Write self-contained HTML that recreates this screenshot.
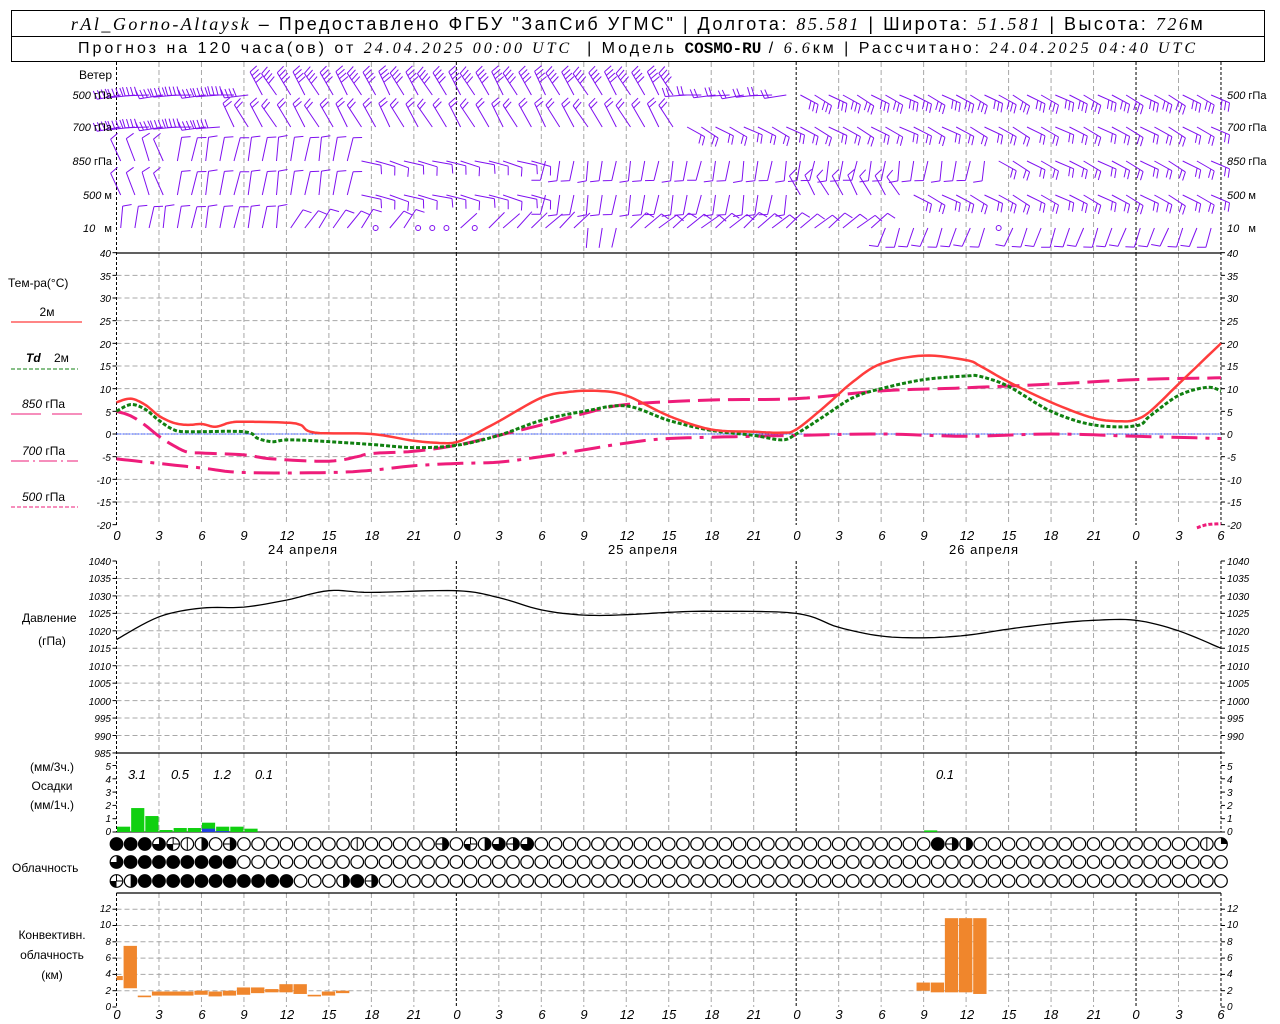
<!DOCTYPE html>
<html><head><meta charset="utf-8">
<style>
html,body{margin:0;padding:0;background:#fff;}
body{width:1280px;height:1024px;overflow:hidden;position:relative;font-family:"Liberation Sans","DejaVu Sans",sans-serif;}
#hdr{position:absolute;left:11px;top:10px;width:1252px;height:50px;border:1px solid #000;}
.row{position:absolute;left:0;width:100%;text-align:center;white-space:nowrap;color:#000;}
#r1{top:0;height:25px;line-height:26px;font-size:18px;border-bottom:1px solid #000;letter-spacing:2.5px}
#r2{top:26px;height:24px;line-height:24px;font-size:16px;letter-spacing:3px}
i{font-family:"Liberation Serif",serif;}
svg{position:absolute;left:0;top:0;}
svg text{font-family:"Liberation Sans","DejaVu Sans",sans-serif;fill:#000;}
.t{font-size:10px;font-style:italic;}
.hx{font-size:13px;font-style:italic;}
</style></head><body>
<div id="hdr">
<div class="row" id="r1"><i>rAl_Gorno-Altaysk</i> – Предоставлено ФГБУ "ЗапСиб УГМС" | Долгота: <i>85.581</i> | Широта: <i>51.581</i> | Высота: <i>726</i>м</div>
<div class="row" id="r2">Прогноз на 120 часа(ов) от <i>24.04.2025 00:00 UTC</i> &nbsp;| Модель <b style="font-family:'Liberation Mono',monospace;letter-spacing:0">COSMO-RU</b> / <i>6.6</i>км | Рассчитано: <i>24.04.2025 04:40 UTC</i></div>
</div>
<svg id="s" width="1280" height="1024" xmlns="http://www.w3.org/2000/svg">
<g id="g"></g>
<g font-size="11">
<text x="112" y="79" text-anchor="end" font-size="12">Ветер</text>
<text x="112" y="99" text-anchor="end"><tspan font-style="italic">500</tspan> гПа</text>
<text x="112" y="131" text-anchor="end"><tspan font-style="italic">700</tspan> гПа</text>
<text x="112" y="165" text-anchor="end"><tspan font-style="italic">850</tspan> гПа</text>
<text x="112" y="199" text-anchor="end"><tspan font-style="italic">500</tspan> м</text>
<text x="112" y="232" text-anchor="end"><tspan font-style="italic">10</tspan> &#160; м</text>
<text x="1227" y="99"><tspan font-style="italic">500</tspan> гПа</text>
<text x="1227" y="131"><tspan font-style="italic">700</tspan> гПа</text>
<text x="1227" y="165"><tspan font-style="italic">850</tspan> гПа</text>
<text x="1227" y="199"><tspan font-style="italic">500</tspan> м</text>
<text x="1227" y="232"><tspan font-style="italic">10</tspan> &#160; м</text>
</g>
<g font-size="12">
<text x="8" y="287">Тем-ра(°C)</text>
<text x="47" y="316" text-anchor="middle">2м</text>
<text x="26" y="362" font-style="italic" font-weight="bold" font-family="Liberation Serif">Td</text><text x="54" y="362">2м</text>
<text x="22" y="408"><tspan font-style="italic">850</tspan> гПа</text>
<text x="22" y="455"><tspan font-style="italic">700</tspan> гПа</text>
<text x="22" y="501"><tspan font-style="italic">500</tspan> гПа</text>
<text x="22" y="622">Давление</text>
<text x="52" y="645" text-anchor="middle">(гПа)</text>
<text x="52" y="771" text-anchor="middle">(мм/3ч.)</text>
<text x="52" y="790" text-anchor="middle">Осадки</text>
<text x="52" y="809" text-anchor="middle">(мм/1ч.)</text>
<text x="12" y="872">Облачность</text>
<text x="52" y="939" text-anchor="middle">Конвективн.</text>
<text x="52" y="959" text-anchor="middle">облачность</text>
<text x="52" y="979" text-anchor="middle">(км)</text>
<text x="303" y="554" text-anchor="middle" font-size="13" letter-spacing="1">24 апреля</text>
<text x="643" y="554" text-anchor="middle" font-size="13" letter-spacing="1">25 апреля</text>
<text x="984" y="554" text-anchor="middle" font-size="13" letter-spacing="1">26 апреля</text>
</g>
<g font-size="13" font-style="italic">
<text x="137" y="779" text-anchor="middle">3.1</text>
<text x="180" y="779" text-anchor="middle">0.5</text>
<text x="222" y="779" text-anchor="middle">1.2</text>
<text x="264" y="779" text-anchor="middle">0.1</text>
<text x="945" y="779" text-anchor="middle">0.1</text>
</g>
<g class="hx" text-anchor="middle">
<text x="117" y="540">0</text><text x="159" y="540">3</text><text x="202" y="540">6</text><text x="244" y="540">9</text><text x="287" y="540">12</text><text x="329" y="540">15</text><text x="372" y="540">18</text><text x="414" y="540">21</text><text x="457" y="540">0</text><text x="499" y="540">3</text><text x="542" y="540">6</text><text x="584" y="540">9</text><text x="627" y="540">12</text><text x="669" y="540">15</text><text x="712" y="540">18</text><text x="754" y="540">21</text><text x="797" y="540">0</text><text x="839" y="540">3</text><text x="882" y="540">6</text><text x="924" y="540">9</text><text x="967" y="540">12</text><text x="1009" y="540">15</text><text x="1051" y="540">18</text><text x="1094" y="540">21</text><text x="1136" y="540">0</text><text x="1179" y="540">3</text><text x="1221" y="540">6</text>
<text x="117" y="1019">0</text><text x="159" y="1019">3</text><text x="202" y="1019">6</text><text x="244" y="1019">9</text><text x="287" y="1019">12</text><text x="329" y="1019">15</text><text x="372" y="1019">18</text><text x="414" y="1019">21</text><text x="457" y="1019">0</text><text x="499" y="1019">3</text><text x="542" y="1019">6</text><text x="584" y="1019">9</text><text x="627" y="1019">12</text><text x="669" y="1019">15</text><text x="712" y="1019">18</text><text x="754" y="1019">21</text><text x="797" y="1019">0</text><text x="839" y="1019">3</text><text x="882" y="1019">6</text><text x="924" y="1019">9</text><text x="967" y="1019">12</text><text x="1009" y="1019">15</text><text x="1051" y="1019">18</text><text x="1094" y="1019">21</text><text x="1136" y="1019">0</text><text x="1179" y="1019">3</text><text x="1221" y="1019">6</text>
</g>
<g class="t">
<text x="111" y="257" text-anchor="end">40</text><text x="111" y="280" text-anchor="end">35</text><text x="111" y="302" text-anchor="end">30</text><text x="111" y="325" text-anchor="end">25</text><text x="111" y="348" text-anchor="end">20</text><text x="111" y="370" text-anchor="end">15</text><text x="111" y="393" text-anchor="end">10</text><text x="111" y="416" text-anchor="end">5</text><text x="111" y="438" text-anchor="end">0</text><text x="111" y="461" text-anchor="end">-5</text><text x="111" y="484" text-anchor="end">-10</text><text x="111" y="506" text-anchor="end">-15</text><text x="111" y="529" text-anchor="end">-20</text>
<text x="1227" y="257">40</text><text x="1227" y="280">35</text><text x="1227" y="302">30</text><text x="1227" y="325">25</text><text x="1227" y="348">20</text><text x="1227" y="370">15</text><text x="1227" y="393">10</text><text x="1227" y="416">5</text><text x="1227" y="438">0</text><text x="1227" y="461">-5</text><text x="1227" y="484">-10</text><text x="1227" y="506">-15</text><text x="1227" y="529">-20</text>
<text x="111" y="565" text-anchor="end">1040</text><text x="111" y="582" text-anchor="end">1035</text><text x="111" y="600" text-anchor="end">1030</text><text x="111" y="617" text-anchor="end">1025</text><text x="111" y="635" text-anchor="end">1020</text><text x="111" y="652" text-anchor="end">1015</text><text x="111" y="670" text-anchor="end">1010</text><text x="111" y="687" text-anchor="end">1005</text><text x="111" y="705" text-anchor="end">1000</text><text x="111" y="722" text-anchor="end">995</text><text x="111" y="740" text-anchor="end">990</text><text x="111" y="757" text-anchor="end">985</text>
<text x="1227" y="565">1040</text><text x="1227" y="582">1035</text><text x="1227" y="600">1030</text><text x="1227" y="617">1025</text><text x="1227" y="635">1020</text><text x="1227" y="652">1015</text><text x="1227" y="670">1010</text><text x="1227" y="687">1005</text><text x="1227" y="705">1000</text><text x="1227" y="722">995</text><text x="1227" y="740">990</text>
<text x="111" y="770" text-anchor="end">5</text><text x="111" y="783" text-anchor="end">4</text><text x="111" y="796" text-anchor="end">3</text><text x="111" y="809" text-anchor="end">2</text><text x="111" y="822" text-anchor="end">1</text><text x="111" y="835" text-anchor="end">0</text>
<text x="1227" y="770">5</text><text x="1227" y="783">4</text><text x="1227" y="796">3</text><text x="1227" y="809">2</text><text x="1227" y="822">1</text><text x="1227" y="835">0</text>
<text x="111" y="912" text-anchor="end">12</text><text x="111" y="928" text-anchor="end">10</text><text x="111" y="945" text-anchor="end">8</text><text x="111" y="961" text-anchor="end">6</text><text x="111" y="977" text-anchor="end">4</text><text x="111" y="994" text-anchor="end">2</text><text x="111" y="1010" text-anchor="end">0</text>
<text x="1227" y="912">12</text><text x="1227" y="928">10</text><text x="1227" y="945">8</text><text x="1227" y="961">6</text><text x="1227" y="977">4</text><text x="1227" y="994">2</text><text x="1227" y="1010">0</text>
</g>
</svg>
<script>
(function(){
var NS="http://www.w3.org/2000/svg",g=document.getElementById('g');
function el(n,a){var e=document.createElementNS(NS,n);for(var k in a)e.setAttribute(k,a[k]);g.appendChild(e);return e;}
var X0=116.5,PX=14.16,XR=X0+78*PX;
function X(h){return X0+h*PX;}
function TY(t){return 434-t*4.533;}
function PY(p){return 561+(1040-p)*3.49;}
function RY(v){return 832-v*13.3;}
function CY(v){return 1007-v*8.15;}
for(var t=-15;t<40;t+=5){el('line',{x1:X0,x2:XR,y1:TY(t),y2:TY(t),stroke:'#a8a8a8','stroke-dasharray':'5,3'});}
for(var p=990;p<1040;p+=5){el('line',{x1:X0,x2:XR,y1:PY(p),y2:PY(p),stroke:'#a8a8a8','stroke-dasharray':'5,3'});}
for(var c=2;c<=12;c+=2){el('line',{x1:X0,x2:XR,y1:CY(c),y2:CY(c),stroke:'#a8a8a8','stroke-dasharray':'5,3'});}
var segs=[[62,253],[253,525],[561,753],[753,832],[893,1007]];
for(var h=3;h<78;h+=3){var day=(h%24==0);
 segs.forEach(function(s){el('line',{x1:X(h),x2:X(h),y1:s[0],y2:s[1],stroke:day?'#000':'#a8a8a8','stroke-dasharray':day?'3,2':'5,3'});});}
[[62,525],[561,832],[893,1007]].forEach(function(s){
 el('line',{x1:X0,x2:X0,y1:s[0],y2:s[1],stroke:'#000','stroke-dasharray':'3,2'});
 el('line',{x1:XR,x2:XR,y1:s[0],y2:s[1],stroke:'#000','stroke-dasharray':'3,2'});});
[253,753,893].forEach(function(y){el('line',{x1:X0,x2:XR,y1:y,y2:y,stroke:'#000','stroke-width':1.2});});
el('line',{x1:X0,x2:XR,y1:832,y2:832,stroke:'#000'});
function ticks(vals,f){vals.forEach(function(v){var y=f(v);el('line',{x1:X0-4,x2:X0,y1:y,y2:y,stroke:'#000'});el('line',{x1:XR,x2:XR+4,y1:y,y2:y,stroke:'#000'});});}
var a=[];for(t=-20;t<=40;t+=5)a.push(t);ticks(a,TY);
a=[];for(p=985;p<=1040;p+=5)a.push(p);ticks(a,PY);
ticks([0,1,2,3,4,5],RY);ticks([0,2,4,6,8,10,12],CY);
el('line',{x1:X0,x2:XR,y1:TY(0),y2:TY(0),stroke:'#3050ff','stroke-dasharray':'2,1'});
function spline(pts,fy){var out=[];for(var i=0;i<pts.length-1;i++){var p0=pts[Math.max(0,i-1)],p1=pts[i],p2=pts[i+1],p3=pts[Math.min(pts.length-1,i+2)];
 for(var s=0;s<8;s++){var u=s/8,u2=u*u,u3=u2*u;
  var x=0.5*((2*p1[0])+(-p0[0]+p2[0])*u+(2*p0[0]-5*p1[0]+4*p2[0]-p3[0])*u2+(-p0[0]+3*p1[0]-3*p2[0]+p3[0])*u3);
  var y=0.5*((2*p1[1])+(-p0[1]+p2[1])*u+(2*p0[1]-5*p1[1]+4*p2[1]-p3[1])*u2+(-p0[1]+3*p1[1]-3*p2[1]+p3[1])*u3);
  out.push(X(x).toFixed(1)+','+fy(y).toFixed(1));}}
 var l=pts[pts.length-1];out.push(X(l[0]).toFixed(1)+','+fy(l[1]).toFixed(1));return out.join(' ');}
var T2=[[0,7],[1,7.8],[2,6.5],[3,4],[4,2.5],[5,2],[6,2.2],[7,1.6],[8,2.5],[9,2.7],[12,2.5],[13,2],[14,0.3],[18,0],[21,-1.5],[23,-2],[24,-1.8],[25,-0.5],[27,2.8],[30,8],[32,9.3],[34,9.5],[36,8.5],[39,4],[42,1],[45,0.5],[47,0.3],[48,1],[50,6],[52,11.5],[54,15.5],[57,17.3],[60,16.3],[61,15],[63,11.5],[66,7],[69,3.5],[71,2.8],[72,3.2],[73,5],[75,11],[78,20]];
var TD=[[0,5],[1,6.5],[2,5.5],[3,3],[4,1],[5,0.5],[9,0.5],[10,-1],[11,-1.7],[12,-1.3],[14,-1.5],[18,-2.3],[21,-3],[24,-2.5],[27,-0.3],[30,3],[33,5],[36,6.2],[39,3],[42,0.8],[45,-0.3],[47,-1.3],[48,0],[50,4],[52,8],[54,10],[57,12],[60,12.8],[61,12.7],[63,10.5],[66,5],[69,2],[72,1.8],[73,4],[75,8.5],[77,10.3],[78,9.5]];
var P85=[[0,5],[1,4],[2,2],[3,-0.5],[4,-2.5],[5,-4],[6,-4.2],[9,-4.6],[11,-5.5],[15,-6],[17,-5],[18,-4.3],[21,-3.8],[24,-2.5],[27,-0.3],[30,2],[33,4.5],[36,6.5],[42,7.5],[48,7.8],[54,9.5],[60,10.2],[66,11],[72,12],[78,12.4]];
var P70=[[0,-5.5],[3,-6.5],[6,-7.5],[9,-8.5],[15,-8.5],[18,-8],[21,-7],[24,-6.5],[27,-6.2],[30,-5],[33,-3.5],[36,-2],[39,-1],[45,-0.5],[48,-0.3],[54,0],[60,-0.5],[66,0],[72,-0.5],[78,-1]];
var P50=[[76.3,-20.7],[77,-20],[78,-19.8]];
var PR=[[0,1017.5],[3,1024],[6,1026.5],[9,1026.8],[12,1028.8],[15,1031.5],[18,1031],[24,1031.5],[27,1029.5],[30,1026],[33,1024.5],[36,1024.6],[39,1025.3],[42,1025.6],[48,1025],[51,1021],[54,1018.5],[57,1018],[60,1018.7],[63,1020.5],[66,1022],[69,1023],[72,1023],[75,1020],[78,1015]];
el('polyline',{points:spline(P70,TY),fill:'none',stroke:'#ee1c7a','stroke-width':3,'stroke-dasharray':'26,8,4,8'});
el('polyline',{points:spline(P85,TY),fill:'none',stroke:'#ee1c7a','stroke-width':3,'stroke-dasharray':'22,8'});
el('polyline',{points:spline(P50,TY),fill:'none',stroke:'#ee1c7a','stroke-width':3,'stroke-dasharray':'4,2'});
el('polyline',{points:spline(TD,TY),fill:'none',stroke:'#108010','stroke-width':3,'stroke-dasharray':'4,2'});
el('polyline',{points:spline(T2,TY),fill:'none',stroke:'#ff3c3c','stroke-width':2.5});
el('polyline',{points:spline(PR,PY),fill:'none',stroke:'#000','stroke-width':1.3});
el('line',{x1:11,x2:82,y1:322,y2:322,stroke:'#ff3c3c','stroke-width':1.2});
el('line',{x1:11,x2:78,y1:369,y2:369,stroke:'#108010','stroke-dasharray':'4,2'});
el('line',{x1:11,x2:41,y1:414,y2:414,stroke:'#ee1c7a'});el('line',{x1:52,x2:82,y1:414,y2:414,stroke:'#ee1c7a'});
el('line',{x1:11,x2:78,y1:461,y2:461,stroke:'#ee1c7a','stroke-dasharray':'18,4,2,4'});
el('line',{x1:11,x2:78,y1:507,y2:507,stroke:'#ee1c7a','stroke-dasharray':'4,2'});
var PRC=[[0,0.4],[1,1.8],[2,1.2],[3,0.15],[4,0.3],[5,0.3],[6,0.7],[7,0.4],[8,0.4],[9,0.25],[57,0.12]];
PRC.forEach(function(b){el('rect',{x:X(b[0])+0.5,y:RY(b[1]),width:PX-1,height:b[1]*13.3,fill:'#10d010'});});
el('rect',{x:X(6)+0.5,y:RY(0.25),width:PX-1,height:0.25*13.3,fill:'#2040e0'});
el('rect',{x:X(7)+0.5,y:RY(0.07),width:PX-1,height:0.07*13.3,fill:'#2040e0'});
var CV=[[0,0.5,3.3,3.8],[0.5,1.5,2.3,7.5],[1.5,2.5,1.2,1.4],[2.5,5.5,1.4,1.9],[5.5,6.5,1.5,2],[6.5,7.5,1.3,1.9],[7.5,8.5,1.4,2],[8.5,9.5,1.5,2.4],[9.5,10.5,1.7,2.4],[10.5,11.5,1.8,2.2],[11.5,12.5,1.8,2.8],[12.5,13.5,1.6,2.8],[13.5,14.5,1.3,1.5],[14.5,15.5,1.4,1.9],[15.5,16.5,1.7,2],[56.5,57.5,2,3],[57.5,58.5,1.8,3],[58.5,59.5,1.8,10.9],[59.5,60.5,1.8,10.9],[60.5,61.5,1.6,10.9]];
CV.forEach(function(b){el('rect',{x:X(b[0]),y:CY(b[3]),width:(b[1]-b[0])*PX-0.8,height:(b[3]-b[2])*8.15,fill:'#f0862c'});});
function rowcodes(m){var s=[];for(var i=0;i<79;i++)s.push(m[i]||'E');return s;}
var R1=rowcodes({0:'F',1:'F',2:'F',3:'3',4:'1',5:'v',6:'h',8:'x',17:'v',23:'x',25:'1',26:'h',27:'3',28:'x',29:'3',58:'F',59:'x',60:'h',77:'v',78:'q'});
var R2=rowcodes({0:'3',1:'F',2:'F',3:'F',4:'F',5:'F',6:'F',7:'F',8:'F'});
var R3=rowcodes({0:'1',1:'h',2:'F',3:'F',4:'F',5:'F',6:'F',7:'F',8:'F',9:'F',10:'F',11:'F',12:'F',16:'h',17:'F',18:'x'});
function cloud(cx,cy,c){var r=6.3;
 el('circle',{cx:cx,cy:cy,r:r,fill:c=='F'?'#000':'#fff',stroke:'#000','stroke-width':1.2});
 function pie(a1,a2){var p='M'+cx+','+cy;for(var a=a1;a<=a2+0.01;a+=Math.PI/12){p+=' L'+(cx+r*Math.sin(a)).toFixed(2)+','+(cy-r*Math.cos(a)).toFixed(2);}el('path',{d:p+'Z',fill:'#000'});}
 if(c=='v'){el('line',{x1:cx,x2:cx,y1:cy-r,y2:cy+r,stroke:'#000'});}
 if(c=='h'){pie(0,Math.PI);}
 if(c=='1'){pie(Math.PI,Math.PI*1.5);el('line',{x1:cx,x2:cx,y1:cy-r,y2:cy,stroke:'#000'});el('line',{x1:cx,x2:cx+r,y1:cy,y2:cy,stroke:'#000'});}
 if(c=='q'){pie(0,Math.PI/2);}
 if(c=='3'){pie(0,Math.PI*1.5);}
 if(c=='x'){pie(0,Math.PI);el('line',{x1:cx-r,x2:cx,y1:cy,y2:cy,stroke:'#000'});}
}
[[R1,844],[R2,862],[R3,881]].forEach(function(r){for(var i=0;i<79;i++)cloud(X(i),r[1],r[0][i]);});
var rows=[
 {y:95,segs:[[0,10,-95,4,24],[10,40,-30,4,26],[40,48,-95,2,22],[48,78,118,3,20]]},
 {y:127,segs:[[0,8,-95,4,24],[8,40,-30,2,26],[40,78,118,2,20]]},
 {y:161,segs:[[0,4,-20,1,24],[4,17,10,1,24],[17,30,105,1,20],[30,48,190,1,20],[48,62,190,1,20],[62,78,118,2,20]]},
 {y:195,segs:[[0,4,-20,1,24],[4,17,10,1,24],[17,30,105,1,20],[30,48,190,1,20],[48,56,-30,1,22],[56,78,118,2,20]]},
 {y:228,segs:[[0,12,10,1,22],[12,22,35,1,22],[22,33,45,0,22],[33,36,190,0,20],[36,48,50,1,22],[48,54,50,1,22],[54,78,200,1,20]]}];
rows.forEach(function(r){r.segs.forEach(function(s){for(var h=s[0];h<s[1];h++){
 var hx=X(h+0.3),ang=(s[2]+((h*37)%11-5))*Math.PI/180;
 if(r.y==228&&(h==18||h==21||h==22||h==23||h==25||h==62)){el('circle',{cx:hx,cy:r.y,r:2.5,fill:'none',stroke:'#7f10f0'});continue;}
 var L=s[4],dx=Math.sin(ang),dy=-Math.cos(ang);
 var ex=hx+L*dx,ey=r.y+L*dy;
 var p='M'+hx.toFixed(1)+','+r.y+' L'+ex.toFixed(1)+','+ey.toFixed(1);
 var ba=ang+75*Math.PI/180,bx=Math.sin(ba),by=-Math.cos(ba);
 for(var k=0;k<s[3];k++){var sx=ex-dx*k*4,sy=ey-dy*k*4;
  p+=' M'+sx.toFixed(1)+','+sy.toFixed(1)+' l'+(bx*9).toFixed(1)+','+(by*9).toFixed(1);}
 el('path',{d:p,fill:'none',stroke:'#7f10f0','stroke-width':1});}});});
})();
</script>
</body></html>
